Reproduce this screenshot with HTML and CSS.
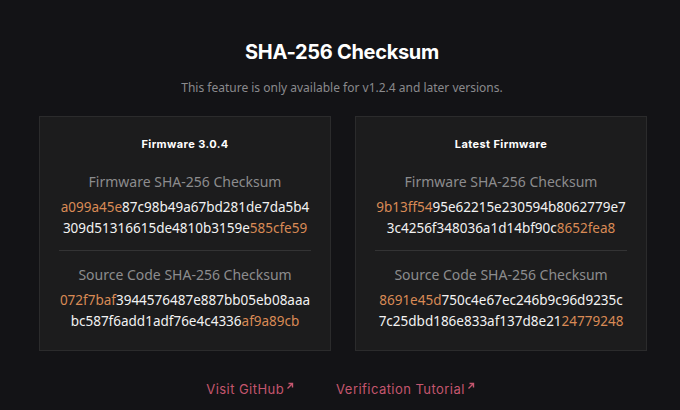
FILE: index.html
```html
<!DOCTYPE html>
<html>
  <head>
    <meta charset="UTF-8" />
    <title>SHA-256 Checksum</title>
    <link rel="stylesheet" href="styles.css">
  </head>
  <body>
    <div class="checksum">
      <h1 class="title">SHA-256 Checksum</h1>
      <p class="subtitle">This feature is only available for v1.2.4 and later versions.</p>

      <div class="cards">
        <div class="card">
          <h2>Firmware 3.0.4</h2>
          <div class="block">
            <div class="label">Firmware SHA-256 Checksum</div>
            <div class="hash"><span class="hl">a099a45e</span>87c98b49a67bd281de7da5b4<br>309d51316615de4810b3159e<span class="hl">585cfe59</span></div>
          </div>
          <div class="block">
            <div class="label">Source Code SHA-256 Checksum</div>
            <div class="hash"><span class="hl">072f7baf</span>3944576487e887bb05eb08aaa<br>bc587f6add1adf76e4c4336<span class="hl">af9a89cb</span></div>
          </div>
        </div>

        <div class="card">
          <h2>Latest Firmware</h2>
          <div class="block">
            <div class="label">Firmware SHA-256 Checksum</div>
            <div class="hash"><span class="hl">9b13ff54</span>95e62215e230594b8062779e7<br>3c4256f348036a1d14bf90c<span class="hl">8652fea8</span></div>
          </div>
          <div class="block">
            <div class="label">Source Code SHA-256 Checksum</div>
            <div class="hash"><span class="hl">8691e45d</span>750c4e67ec246b9c96d9235c<br>7c25dbd186e833af137d8e21<span class="hl">24779248</span></div>
          </div>
        </div>
      </div>

      <div class="links">
        <a href="#">Visit GitHub<svg viewBox="0 0 10 10"><path d="M2.5 7.5 L7.5 2.5 M3.5 2.5 H7.5 V6.5" /></svg></a>
        <a href="#">Verification Tutorial<svg viewBox="0 0 10 10"><path d="M2.5 7.5 L7.5 2.5 M3.5 2.5 H7.5 V6.5" /></svg></a>
      </div>
    </div>
  </body>
</html>
```

FILE: styles.css
```css
* {
  box-sizing: border-box;
}

body {
  margin: 0;
  background-color: #131316;
  font-family: "Noto Sans", "Open Sans", sans-serif;
  color: #fff;
}

.checksum {
  width: 680px;
  height: 410px;
  padding-top: 40px;
  text-align: center;
}

.title {
  margin: 0;
  padding-left: 4px;
  font-family: Inter, "Noto Sans", sans-serif;
  font-size: 20px;
  line-height: 24px;
  font-weight: 700;
  letter-spacing: -0.3px;
}

.subtitle {
  margin: 16px 0 0;
  padding-left: 4px;
  font-size: 12px;
  line-height: 16px;
  color: #8a8a8d;
}

.cards {
  display: grid;
  grid-template-columns: 292px 292px;
  gap: 24px;
  justify-content: center;
  padding-left: 6px;
  margin-top: 20px;
}

.card {
  background-color: #1c1c1d;
  border: 1px solid #2b2b2c;
  padding: 19px 19px 19px;
}

.card h2 {
  margin: 0;
  font-family: Inter, "Noto Sans", sans-serif;
  font-size: 11px;
  line-height: 16px;
  font-weight: 700;
  letter-spacing: 0.4px;
}

.block {
  padding: 20px 0 12px;
}

.block + .block {
  border-top: 1px solid #333334;
  padding: 14px 0 0;
}

.label {
  font-size: 14px;
  line-height: 20px;
  color: #8c8c8e;
}

.hash {
  margin-top: 5px;
  font-size: 13.5px;
  line-height: 20.5px;
  color: #f2f2f2;
}

.hash .hl {
  color: #d98a55;
}

.links {
  display: flex;
  justify-content: center;
  gap: 41px;
  margin-top: 29px;
  padding-left: 2px;
}

.links a {
  display: flex;
  align-items: flex-start;
  color: #c5566e;
  text-decoration: none;
  font-family: Inter, "Noto Sans", sans-serif;
  font-size: 13px;
  line-height: 18px;
  letter-spacing: 0.45px;
}

.links svg {
  width: 10px;
  height: 10px;
  margin: 1px 0 0 1px;
  fill: none;
  stroke: #c5566e;
  stroke-width: 1.4;
}
```
